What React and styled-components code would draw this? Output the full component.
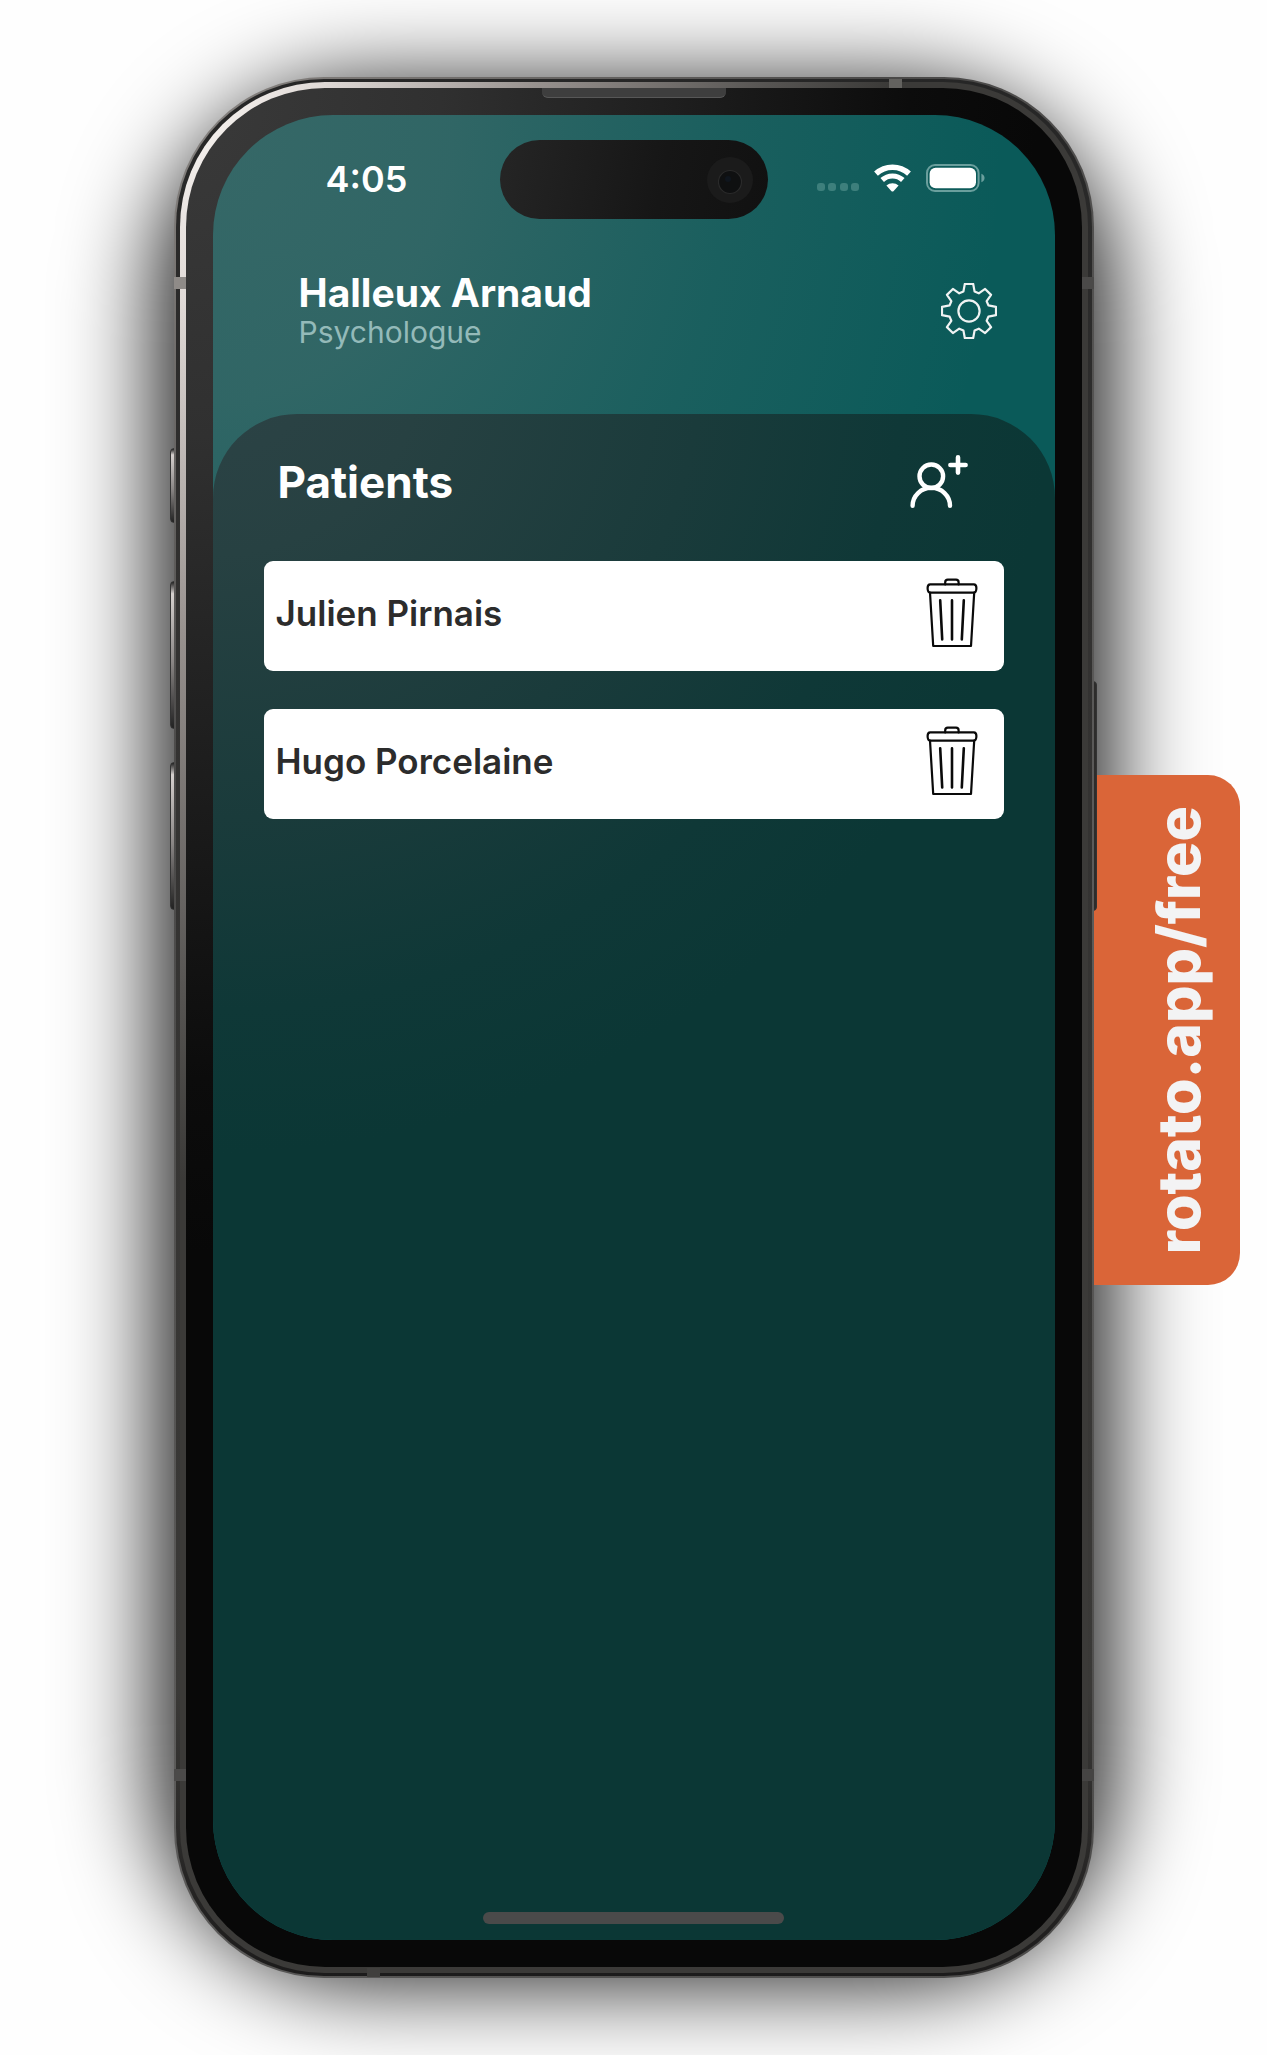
import React from "react";
import styled, { createGlobalStyle } from "styled-components";

const GlobalStyle = createGlobalStyle`
  * { box-sizing: border-box; }
  body { margin: 0; background: #fefefe; font-family: Inter, "Liberation Sans", sans-serif; }
  h1, h2, p, ul { margin: 0; padding: 0; }
`;

const Stage = styled.main`
  display: flex;
  justify-content: center;
  min-height: 100vh;
  padding: 77px 16px;
  overflow: hidden;
`;

const Device = styled.div`
  position: relative;
  z-index: 0;
  display: flex;
  width: 100%;
  max-width: 920px;
  min-height: 1901px;

  &::before {
    content: "";
    position: absolute;
    z-index: -3;
    inset: 10px -14px -2px;
    border-radius: 205px;
    background: rgba(0, 0, 0, 0.94);
    filter: blur(48px);
  }
`;

const OuterRim = styled.div`
  display: flex;
  flex: 1;
  padding: 2px;
  border-radius: 150px;
  background: linear-gradient(135deg, #8a8683 0%, #4a4948 25%, #5c5b5a 60%, #4c4b4a 100%);
`;

const DarkRim = styled.div`
  display: flex;
  flex: 1;
  padding: 3px 4px;
  border-radius: 148px;
  background: linear-gradient(180deg, #262626 0%, #333231 30%, #3a3937 85%, #1c1b1b 100%);
`;

const SteelRim = styled.div`
  display: flex;
  flex: 1;
  padding: 6px;
  border-radius: 145px;
  background: radial-gradient(78% 58% at 0 0, #fbf7f4 0%, #e0dad7 20%, #98928f 50%, #585654 82%, #3b3a38 100%);
`;

const Bezel = styled.div`
  position: relative;
  display: flex;
  flex: 1;
  padding: 27px;
  border-radius: 139px;
  background: radial-gradient(95% 62% at 0 0, #3a3a3a 0%, #303030 30%, #1b1b1b 62%, #0c0c0c 85%, #080808 100%);
`;

const Speaker = styled.div`
  position: absolute;
  top: 0;
  left: 50%;
  width: 184px;
  height: 10px;
  transform: translateX(-50%);
  border-bottom: 1px solid #575757;
  border-radius: 0 0 6px 6px;
  background: #3e3e3e;
`;

const SideButton = styled.i`
  position: absolute;
  z-index: -1;
  ${(p) => (p.$side === "left" ? "left: -4px" : "right: -3px")};
  top: ${(p) => p.$top}px;
  width: 8px;
  height: ${(p) => p.$length}px;
  border: 1px solid #333;
  border-radius: 4px;
  background: ${(p) =>
    p.$side === "left"
      ? "linear-gradient(180deg, #222 0%, #d5d0ce 8%, #8a8685 55%, #222 100%)"
      : "#2d2c2b"};
`;

const Antenna = styled.i`
  position: absolute;
  ${(p) => p.$place};
  width: ${(p) => (p.$flat ? 13 : 12)}px;
  height: ${(p) => (p.$flat ? 9 : 12)}px;
  background: ${(p) => p.$tone};
`;

const Screen = styled.div`
  display: flex;
  flex: 1;
  flex-direction: column;
  overflow: hidden;
  border-radius: 120px;
  background:
    radial-gradient(94% 52% at 0 0, rgba(126, 126, 126, 0.38) 0%, rgba(126, 126, 126, 0.33) 30%, rgba(126, 126, 126, 0.14) 65%, rgba(126, 126, 126, 0) 100%),
    #0a5a59;
`;

const StatusBar = styled.div`
  display: grid;
  grid-template-columns: 1fr 268px 1fr;
  align-items: center;
  padding: 25px 70px 0;
  color: #fff;
`;

const Clock = styled.time`
  padding: 0 0 2px 43px;
  font-size: 36px;
  line-height: 44px;
  font-weight: 600;
`;

const Island = styled.div`
  display: flex;
  align-items: center;
  justify-content: flex-end;
  height: 79px;
  padding-right: 15px;
  border-radius: 40px;
  background: linear-gradient(100deg, #252525, #161616 60%, #111);
`;

const StatusIcons = styled.div`
  display: flex;
  align-items: center;
  justify-content: flex-end;
  gap: 15px;
  padding-bottom: 3px;
`;

const Header = styled.header`
  display: flex;
  align-items: center;
  justify-content: space-between;
  height: 195px;
  padding: 0 58px 11px 86px;
`;

const UserName = styled.h1`
  color: #fff;
  font-size: 39px;
  line-height: 42px;
  font-weight: 700;
`;

const UserRole = styled.p`
  color: #94bab9;
  font-size: 30px;
  line-height: 36px;
`;

const IconButton = styled.button`
  display: flex;
  padding: 0;
  border: 0;
  background: none;
  color: inherit;
  cursor: pointer;
`;

const Panel = styled.section`
  display: flex;
  flex: 1;
  flex-direction: column;
  padding: 40px 51px 16px;
  border-radius: 84px 84px 0 0;
  color: #fff;
  background:
    radial-gradient(100% 800px at 0 -60px, #2d4346 0%, #274142 25%, #1a3b3b 58%, #0f3837 82%, #0b3735 100%);
`;

const PanelHeader = styled.div`
  display: flex;
  align-items: center;
  justify-content: space-between;
  height: 58px;
  padding: 0 36px 2px 14px;
`;

const PanelTitle = styled.h2`
  font-size: 44px;
  line-height: 58px;
  font-weight: 700;
`;

const PatientList = styled.ul`
  display: flex;
  flex: 1;
  flex-direction: column;
  gap: 38px;
  padding-top: 49px;
  list-style: none;
`;

const PatientRow = styled.li`
  display: flex;
  align-items: center;
  justify-content: space-between;
  height: 110px;
  padding: 0 26px 6px 12px;
  border-radius: 9px;
  background: #fff;
  color: #2c2c2c;
`;

const PatientName = styled.span`
  font-size: 35px;
  line-height: 42px;
  font-weight: 600;
`;

const HomeBar = styled.div`
  align-self: center;
  width: 301px;
  height: 12px;
  border-radius: 6px;
  background: #4a4a4a;
`;

const PromoTag = styled.a`
  position: absolute;
  z-index: -2;
  top: 698px;
  right: -146px;
  display: flex;
  align-items: center;
  justify-content: center;
  width: 160px;
  height: 510px;
  padding-left: 38px;
  border-radius: 0 32px 32px 0;
  background: #da6538;
  color: #f3f3f4;
  text-decoration: none;
  font-size: 59px;
  line-height: 72px;
  font-weight: 800;
  writing-mode: vertical-rl;
`;

const PromoText = styled.span`
  transform: rotate(180deg);
`;

const Camera = () => (
  <svg width="46" height="46" viewBox="0 0 46 46" aria-hidden="true">
    <circle cx="23" cy="23" r="23" fill="#1b1b1b" />
    <circle cx="23" cy="25" r="11.5" fill="#0f1011" stroke="#2a2a2a" strokeWidth="1.2" />
    <circle cx="21" cy="22" r="3" fill="#0f151d" />
  </svg>
);

const SignalDots = () => (
  <svg width="42" height="8" viewBox="0 0 42 8" aria-hidden="true">
    {[0, 11, 23, 34].map((x) => (
      <rect key={x} x={x} y="0" width="8" height="8" rx="3" fill="#3d7f7c" />
    ))}
  </svg>
);

const SignalSlot = styled.span`
  display: flex;
  padding-top: 18px;
`;

const Wifi = () => (
  <svg width="37" height="28" viewBox="0 0 37 28" fill="none" aria-hidden="true">
    <path d="M2 9.6a24.4 24.4 0 0 1 33 0" stroke="#fff" strokeWidth="5.6" />
    <path d="M8.2 16a15.2 15.2 0 0 1 20.6 0" stroke="#fff" strokeWidth="5.2" />
    <path d="M12.4 21.6a9.3 9.3 0 0 1 12.2 0l-4.9 5.4q-1.2 1.2-2.4 0z" fill="#fff" />
  </svg>
);

const Battery = () => (
  <svg width="59" height="28" viewBox="0 0 59 28" aria-hidden="true">
    <rect x="1" y="1" width="51.6" height="26" rx="8" fill="none" stroke="#6a9f9d" strokeWidth="2" />
    <rect x="3.6" y="3.8" width="46.4" height="20.4" rx="6" fill="#fff" />
    <path d="M55.4 9.8c4.2 1.6 4.2 6.8 0 8.4z" fill="#6a9f9d" />
  </svg>
);

const gearPath = (() => {
  const tooth = [
    [-5.6, -19.4], [-4.2, -27], [4.2, -27], [5.6, -19.4],
  ];
  const pts = [];
  for (let i = 0; i < 8; i += 1) {
    const a = (i * Math.PI) / 4;
    tooth.forEach(([x, y]) => {
      const px = 28 + x * Math.cos(a) - y * Math.sin(a);
      const py = 28 + x * Math.sin(a) + y * Math.cos(a);
      pts.push(`${px.toFixed(2)} ${py.toFixed(2)}`);
    });
  }
  return `M${pts.join("L")}Z`;
})();

const Gear = () => (
  <svg width="56" height="56" viewBox="0 0 56 56" fill="none" stroke="#f0f3f3" strokeWidth="2.2" strokeLinejoin="round" aria-hidden="true">
    <path d={gearPath} />
    <circle cx="28" cy="28" r="10.6" />
  </svg>
);

const AddUser = () => (
  <svg width="58" height="54" viewBox="0 0 58 54" fill="none" stroke="#fff" strokeWidth="4.4" strokeLinecap="round" aria-hidden="true">
    <circle cx="21.3" cy="21.3" r="11.8" />
    <path d="M2.6 50.8a18.7 18 0 0 1 37.4 0" />
    <path d="M48 2.4v15.2M40.4 10h15.2" strokeWidth="4.6" />
  </svg>
);

const Trash = () => (
  <svg width="52" height="70" viewBox="0 0 52 70" fill="none" stroke="#0a0a0a" strokeWidth="2.2" strokeLinecap="round" strokeLinejoin="round" aria-hidden="true">
    <path d="M19.2 6.4V4.2Q19.2 1.6 21.8 1.6H30Q32.6 1.6 32.6 4.2V6.4" />
    <path d="M4.2 6.4h43.6q2.6 0 2.6 3.6 0 4.6-2.6 4.6H4.2q-2.6 0-2.6-4.6 0-3.6 2.6-3.6z" />
    <path d="M4 14.6l3.2 53.4h37.8l3.2-53.4" />
    <path d="M14.2 22.4l2 39M26 22.4v39M37.8 22.4l-2 39" strokeWidth="2.6" />
  </svg>
);

const patients = ["Julien Pirnais", "Hugo Porcelaine"];

export default function App() {
  return (
    <>
      <GlobalStyle />
      <Stage>
        <Device>
          <PromoTag href="#free">
            <PromoText>rotato.app/free</PromoText>
          </PromoTag>
          <SideButton $side="left" $top={371} $length={75} />
          <SideButton $side="left" $top={504} $length={148} />
          <SideButton $side="left" $top={685} $length={148} />
          <SideButton $side="right" $top={604} $length={230} />
          <OuterRim>
            <DarkRim>
              <SteelRim>
                <Bezel>
                  <Speaker />
                  <Screen>
                    <StatusBar>
                      <Clock>4:05</Clock>
                      <Island>
                        <Camera />
                      </Island>
                      <StatusIcons>
                        <SignalSlot>
                          <SignalDots />
                        </SignalSlot>
                        <Wifi />
                        <Battery />
                      </StatusIcons>
                    </StatusBar>
                    <Header>
                      <div>
                        <UserName>Halleux Arnaud</UserName>
                        <UserRole>Psychologue</UserRole>
                      </div>
                      <IconButton aria-label="Paramètres">
                        <Gear />
                      </IconButton>
                    </Header>
                    <Panel>
                      <PanelHeader>
                        <PanelTitle>Patients</PanelTitle>
                        <IconButton aria-label="Ajouter un patient">
                          <AddUser />
                        </IconButton>
                      </PanelHeader>
                      <PatientList>
                        {patients.map((name) => (
                          <PatientRow key={name}>
                            <PatientName>{name}</PatientName>
                            <IconButton aria-label={`Supprimer ${name}`}>
                              <Trash />
                            </IconButton>
                          </PatientRow>
                        ))}
                      </PatientList>
                      <HomeBar />
                    </Panel>
                  </Screen>
                </Bezel>
              </SteelRim>
            </DarkRim>
          </OuterRim>
          <Antenna $flat $place="top: 2px; left: 715px" $tone="#63625f" />
          <Antenna $place="top: 200px; left: 0" $tone="#8f8b88" />
          <Antenna $place="top: 200px; right: 0" $tone="#4a4948" />
          <Antenna $place="bottom: 197px; left: 0" $tone="#4b4a49" />
          <Antenna $place="bottom: 197px; right: 0" $tone="#454443" />
          <Antenna $flat $place="bottom: 1px; left: 193px" $tone="#403f3d" />
        </Device>
      </Stage>
    </>
  );
}
